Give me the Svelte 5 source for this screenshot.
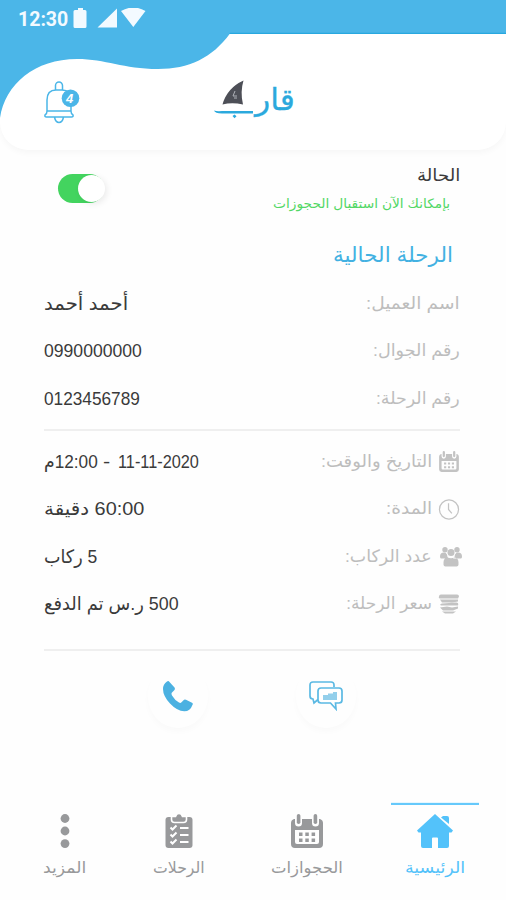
<script>
  let online = $state(true);

  const trip = [
    { label: 'اسم العميل:', lw: 94, value: 'أحمد أحمد', vw: 84 },
    { label: 'رقم الجوال:', lw: 87, value: '0990000000', vw: 98 },
    { label: 'رقم الرحلة:', lw: 84, value: '0123456789', vw: 96 }
  ];
  const details = [
    { icon: 'calendar', label: 'التاريخ والوقت:', lw: 111, parts: ['11-11-2020', '-', '12:00م'] },
    { icon: 'clock', label: 'المدة:', lw: 46, value: '60:00 دقيقة', vw: 100 },
    { icon: 'people', label: 'عدد الركاب:', lw: 87, value: '5 ركاب', vw: 53 },
    { icon: 'money', label: 'سعر الرحلة:', lw: 86, value: '500 ر.س تم الدفع', vw: 135 }
  ];
  const tabs = [
    { icon: 'home', label: 'الرئيسية', w: 60, active: true },
    { icon: 'calendar', label: 'الحجوازات', w: 72 },
    { icon: 'list', label: 'الرحلات', w: 52 },
    { icon: 'more', label: 'المزيد', w: 43 }
  ];

  // Condenses or widens a line so that it fills the width of its box.
  function fit(node) {
    const natural = node.offsetWidth;
    const width = node.parentElement.clientWidth;
    if (natural) node.style.transform = `scaleX(${width / natural})`;
  }
</script>

{#snippet line(text, width)}
  <span class="line" style="width:{width}px"><span class="ink" use:fit>{text}</span></span>
{/snippet}

{#snippet icon(name)}
  {#if name === 'calendar'}
    <svg viewBox="0 0 32 34" fill="currentColor">
      <path fill-rule="evenodd" d="M3 5h1v4a3.4 3.4 0 0 0 7 0V5h10v4a3.4 3.4 0 0 0 7 0V5h1q3 1 3 4v21q0 4-4 4H4q-4 0-4-4V9q0-3 3-4zM4 16v12q0 2 2 2h20q2 0 2-2V16z" />
      <rect x="5.8" y="0" width="3.600" height="10" rx="1.800" /><rect x="22.600" y="0" width="3.600" height="10" rx="1.800" />
      <path d="M8 18.500h3.500V22H8zM14.300 18.500h3.500V22h-3.500zM20.600 18.500h3.500V22h-3.500zM8 24.500h3.500V28H8zM14.300 24.500h3.500V28h-3.500zM20.600 24.500h3.500V28h-3.500z" />
    </svg>
  {:else if name === 'clock'}
    <svg viewBox="0 0 22 22" fill="none" stroke="currentColor" stroke-width="1.3"><circle cx="11" cy="11" r="10" /><path d="M10.500 4.500V11l3.500 4" /></svg>
  {:else if name === 'people'}
    <svg viewBox="0 0 22 20" fill="currentColor">
      <circle cx="5" cy="3.200" r="2.700" /><circle cx="17" cy="3.200" r="2.700" /><circle cx="11" cy="6" r="3.500" />
      <path d="M0 10q0-4 4-4 2 0 3 2 0 3 2 4H1q-1 0-1-2zM22 10q0-4-4-4-2 0-3 2 0 3-2 4h8q1 0 1-2zM3.500 16q0-4.500 4-5 3.500 1.500 7 0 4 .5 4 5v2q0 2-2 2h-11q-2 0-2-2z" />
    </svg>
  {:else if name === 'money'}
    <svg viewBox="0 0 22 20" fill="currentColor">
      <path d="M3 0h16q2 0 2 2l-1 2H3Q0 4 1 2q0-2 2-2z" />
      <path d="M2 5h18v2l-6 1H4zM4 9l14-1q3 0 2 3H3q-2-1 1-2zM2 13l7-1 5 1 6-1v2l-5 2H5zM4 17h14l-3 2H7z" />
    </svg>
  {:else if name === 'home'}
    <svg viewBox="0 0 36 34" fill="currentColor">
      <path d="M18 0 36 16.500 34.500 18.500H32V32q0 2-2 2H21V24.500q0-1-1-1h-4q-1 0-1 1V34H6q-2 0-2-2V18.500H1.500L0 16.500z" />
      <path d="M24 3.500 26 2h4q2 0 2 2v6z" />
    </svg>
  {:else if name === 'list'}
    <svg viewBox="0 0 27 34">
      <path fill="currentColor" d="M3 3h21q3 0 3 3v25q0 3-3 3H3q-3 0-3-3V6q0-3 3-3z" />
      <path fill="currentColor" stroke="#fff" stroke-width="1.600" d="M6 2.500h4q1-3 3.500-3t3.500 3h4v3q0 3-3 3H9q-3 0-3-3z" />
      <path fill="none" stroke="#fff" stroke-width="2" d="m5 13.500 2 2 4-4M14.500 14H23M5 20.500l2 2 4-4M14.500 21H23M5 27.500l2 2 4-4M14.500 28H23" />
    </svg>
  {:else}
    <svg viewBox="0 0 9 34" fill="currentColor"><circle cx="4.500" cy="4.500" r="4.400" /><circle cx="4.500" cy="17" r="4.400" /><circle cx="4.500" cy="29.600" r="4.400" /></svg>
  {/if}
{/snippet}

<div class="screen" dir="rtl">
  <header>
    <svg class="wave" width="506" height="120" viewBox="0 0 506 120">
      <path fill="#4bb6e8" d="M0 0H506V33.500H230C212 58 189 69 158 69 123 69 106 59 77 59 35 59 5 84 0 118z" />
      <path fill="#28a8df" d="M230 32.800H506V34H229z" />
    </svg>
    <div class="status" dir="ltr">
      <span class="time">12:30</span>
      <svg width="76" height="22" viewBox="0 0 76 22" fill="#f3faff">
        <path d="M4 2h3V0h5v2h2q1.500 0 1.500 1.500V18.500q0 1.500-1.500 1.500H4q-1.500 0-1.500-1.500v-15Q2.500 2 4 2z" />
        <path d="M46 .5V19.500H26.500zM50 3q12.500-7 24.500 0L62.300 19z" />
      </svg>
    </div>
    <div class="brand">
      <div class="logo">
        <div class="name">{@render line('قار', 40)}</div>
        <svg width="40" height="40" viewBox="0 0 40 40">
          <path fill="#4d4f57" d="M8.500 24.500Q13 8 29.500.5 26 12 29 24.500 18 22 8.500 24.500z" />
          <path d="m21 11-2 5h4M20 18h3" stroke="#aeb1b8" stroke-width="1" fill="none" />
          <path fill="#2ba9dd" d="M0 30.500Q3 31.500 8 31H39V33.500H8Q1 33.500 0 30.500zM18.500 36 20.500 34.500l2 1.700-2 2z" />
        </svg>
      </div>
      <button class="bell" aria-label="4">
        <svg width="36" height="43" viewBox="0 0 36 43" fill="none" stroke="#4bb6e8" stroke-width="1.500">
          <path d="M11.500 9V4.500a3.500 3.500 0 0 1 7 0V9M3 30V19Q3 9 12 9h6q9 0 9 10v11zM3 30q0 3-2 4-.5 2 1.500 2h25q2 0 1.500-2-2-1-2-4M10.500 36q1 5.500 4.500 5.500t4.500-5.500" />
          <circle cx="26.500" cy="17.300" r="8.800" fill="#4bb6e8" stroke="none" />
        </svg>
        <b>4</b>
      </button>
    </div>
  </header>

  <main>
    <section class="state">
      <div>
        <h3>{@render line('الحالة', 43)}</h3>
        <p>{@render line('بإمكانك الآن استقبال الحجوزات', 177)}</p>
      </div>
      <button class="switch" class:on={online} aria-label="الحالة" onclick={() => (online = !online)}><i></i></button>
    </section>
    <h2>{@render line('الرحلة الحالية', 120)}</h2>
    <dl>
      {#each trip as row}
        <div class="row"><dt>{@render line(row.label, row.lw)}</dt><dd>{@render line(row.value, row.vw)}</dd></div>
      {/each}
    </dl>
    <dl class="details">
      {#each details as row}
        <div class="row">
          <dt><span class="ico {row.icon}">{@render icon(row.icon)}</span>{@render line(row.label, row.lw)}</dt>
          <dd>
            {#if row.parts}
              <span class="parts">
                {@render line(row.parts[0], 81)}{@render line(row.parts[1], 7)}{@render line(row.parts[2], 54)}
              </span>
            {:else}
              {@render line(row.value, row.vw)}
            {/if}
          </dd>
        </div>
      {/each}
    </dl>
    <div class="actions">
      <button aria-label="رسالة">
        <svg width="34" height="30" viewBox="0 0 34 30" fill="none" stroke="#5bb9e3" stroke-width="1.700">
          <path d="M25 6V4q0-3-3-3H4Q1 1 1 4v11q0 3 3 3l1 4 4-3.500" />
          <path fill="#fff" d="M12 7h18q3 0 3 3v9q0 3-3 3h-3.500l.5 6-5.500-6H12q-3 0-3-3v-9q0-3 3-3z" />
          <path fill="#93cfeb" stroke="none" d="M14 14h5v-1.500h5V11h4v8H14z" />
        </svg>
      </button>
      <button aria-label="اتصال">
        <svg width="30" height="31" viewBox="0 0 30 31" fill="#4bb1e1">
          <path d="M4 .5Q5.500-.5 6.500 1l5 5.500q1 1.500-.5 3L9 11.500q-1 1 0 3 3 5 7 7 1.500 1 2.500-.3l2-2q1-1.200 2.500-.5l6 3q1.500 1 .3 2.600-2 6-8 6Q14 30 7 22.500 0 15 0 8 0 3 4 .5z" />
        </svg>
      </button>
    </div>
  </main>

  <nav>
    {#each tabs as tab}
      <a href="#{tab.icon}" class={[tab.icon, tab.active && 'active']}>
        {@render icon(tab.icon)}
        {@render line(tab.label, tab.w)}
      </a>
    {/each}
  </nav>
</div>

<style>
  :global(body) { margin: 0; background: #fefefe; }
  .screen { width: 506px; height: 900px; overflow: hidden; display: flex; flex-direction: column; background: #fefefe; color: #3a3a3a; font-family: "Liberation Sans", "DejaVu Sans", sans-serif; font-size: 17px; }
  h2, h3, p, dl, dd, dt { margin: 0; font-weight: 400; }
  button { padding: 0; border: 0; background: none; font: inherit; }
  svg { display: block; }
  .line { display: inline-flex; flex: none; justify-content: flex-start; white-space: nowrap; line-height: 24px; height: 24px; }
  .ink { flex: none; transform-origin: right center; }

  header { position: relative; height: 150px; flex: none; border-radius: 0 0 28px 28px; background: #fff; box-shadow: 0 3px 6px rgba(0, 0, 0, .03); }
  .wave { position: absolute; top: 0; left: 0; }
  .status { position: relative; display: flex; align-items: center; gap: 2px; height: 34px; padding: 4px 0 0 18px; box-sizing: border-box; color: #f3faff; }
  .time { width: 51px; font: 700 19.500px Roboto, sans-serif; }
  .brand { position: relative; display: flex; justify-content: space-between; align-items: flex-start; padding: 46px 211px 0 44px; }
  .bell { position: relative; width: 36px; height: 43px; margin-top: 1px; }
  .bell b { position: absolute; left: 22px; top: 10px; font-size: 13px; line-height: 15px; color: #fff; font-style: italic; }
  .logo { display: flex; color: #2ba9dd; }
  .name { font-size: 30px; padding-top: 3px; }
  .name .ink { -webkit-text-stroke: .3px currentColor; }
  .logo svg { margin-right: 1px; }

  main { flex: 1; padding: 12px 46px 0 44px; }
  .state { display: flex; justify-content: space-between; height: 68px; }
  h3, p, h2, dt, dd { display: flex; align-items: center; }
  h3 { height: 28px; font-size: 17px; }
  p { margin: 2px 10px 0 0; font-size: 13px; color: #52d765; }
  .switch { width: 46px; height: 29px; border-radius: 15px; margin: 12px 0 0 14px; background: #ccc; display: flex; justify-content: flex-end; }
  .switch.on { background: #43d45f; justify-content: flex-start; }
  .switch i { width: 27px; height: 27px; margin: 1px -1px; border-radius: 50%; background: #fff; box-shadow: 2px 2px 6px rgba(0, 0, 0, .08); }
  h2 { height: 49px; margin-right: 7px; font-size: 21px; color: #42b1e2; }
  dl { height: 152px; box-sizing: border-box; padding-top: 1px; border-bottom: 2px solid #efefef; }
  .row { display: flex; justify-content: space-between; height: 47.500px; }
  dt { color: #bdbdbd; }
  dd { font-size: 18.500px; }
  .details { height: 220px; padding-top: 7px; }
  .ico { width: 28px; display: flex; color: #c3c3c3; }
  .ico svg { width: 22px; height: 21px; }
  .ico.people svg { margin-right: -2px; }
  .parts { display: flex; justify-content: space-between; width: 155px; }
  .parts .line:nth-child(2) { margin-left: -2px; }
  .actions { display: flex; justify-content: center; gap: 88px; padding: 13px 0 0; }
  .actions button { width: 60px; height: 64px; border-radius: 50%; display: grid; place-items: center; box-shadow: 0 4px 6px rgba(0, 0, 0, .02); }

  nav { height: 98px; flex: none; display: flex; font-size: 16px; color: #98999b; }
  nav a { flex: none; display: flex; flex-direction: column; align-items: center; gap: 8px; padding-top: 12px; width: 128px; box-sizing: border-box; color: inherit; text-decoration: none; }
  nav svg { height: 34px; width: 36px; }
  nav a.more { width: 100px; }
  nav a.active { width: 88px; margin: 0 27px 0 20px; color: #53c2fa; background: linear-gradient(#e6f7ff 0 1px, transparent 1px) , linear-gradient(#66c9fb, #66c9fb) 0 0 / 100% 3px no-repeat; }
</style>
